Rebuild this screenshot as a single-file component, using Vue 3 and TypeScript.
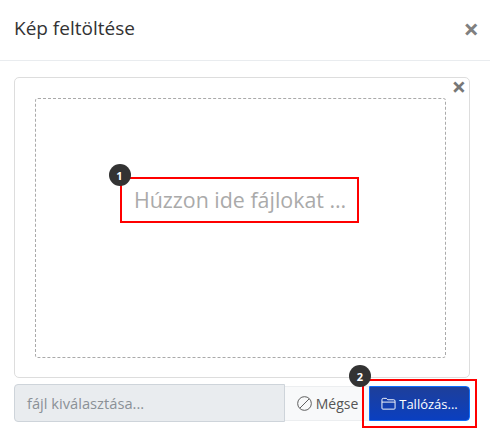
<script setup lang="ts">
const title: string = 'Kép feltöltése'
</script>

<template>
  <div class="modal">
    <header class="head">
      <h1 class="title">{{ title }}</h1>
      <span class="close">×</span>
    </header>
    <main class="body">
      <section class="preview">
        <span class="remove">×</span>
        <div class="zone">
          <div class="drop">
            <span class="marker m1">1</span>
            Húzzon ide fájlokat …
          </div>
        </div>
      </section>
      <div class="group">
        <div class="caption">fájl kiválasztása...</div>
        <button class="cancel">
          <svg class="ico" viewBox="0 0 16 16" fill="none" stroke="currentColor" stroke-width="1">
            <circle cx="8" cy="8" r="7.3" />
            <path d="M3 13 13 3" />
          </svg>
          Mégse
        </button>
        <div class="browse-wrap">
          <span class="marker m2">2</span>
          <span class="outline"></span>
          <button class="browse">
            <svg class="ico folder" viewBox="0 0 16 16" fill="none" stroke="currentColor" stroke-width="1">
              <path d="M1 13V4a1.500 1.500 0 0 1 1.500-1.500h3.200L7.200 4H13.500A1.500 1.500 0 0 1 15 5.500V13a1 1 0 0 1-1 1H2a1 1 0 0 1-1-1Z" />
              <path d="M1 6.500h14" />
            </svg>
            Tallózás...
          </button>
        </div>
      </div>
    </main>
  </div>
</template>

<style>
html, body { margin: 0; background: #fff; }
</style>

<style scoped>
.modal {
  width: 490px;
  height: 434px;
  overflow: hidden;
  font-family: "Open Sans", "Noto Sans", sans-serif;
  color: #212529;
  background: #fff;
}
.head {
  height: 61px;
  box-sizing: border-box;
  border-bottom: 1px solid #e9ecef;
  padding: 0 11px 4px 14px;
  display: flex;
  align-items: center;
  justify-content: space-between;
}
.title {
  margin: 0;
  font-size: 19px;
  font-weight: 400;
  color: #333;
}
.close {
  font-size: 27px;
  font-weight: 700;
  line-height: 1;
  color: #808080;
}
.body {
  padding: 16px 20px 0 14px;
}
.preview {
  position: relative;
  height: 301px;
  box-sizing: border-box;
  border: 1px solid #ddd;
  border-radius: 5px;
  padding: 20px 23px 19px 20px;
}
.remove {
  position: absolute;
  top: -4px;
  right: 3px;
  font-size: 25px;
  line-height: 1;
  font-weight: 700;
  color: #777;
}
.zone {
  height: 100%;
  box-sizing: border-box;
  border: 1px dashed #aaa;
  border-radius: 3px;
  display: flex;
  justify-content: center;
  padding: 78px 3px 0 0;
}
.drop {
  position: relative;
  box-sizing: border-box;
  width: 239px;
  height: 46px;
  border: 2px solid #f00;
  padding: 0 0 2px 2px;
  display: flex;
  align-items: center;
  justify-content: center;
  font-size: 21.400px;
  color: #aaa;
  white-space: nowrap;
}
.marker {
  position: absolute;
  width: 22px;
  height: 22px;
  border-radius: 50%;
  background: #333;
  color: #fff;
  font-size: 11px;
  font-weight: 700;
  display: flex;
  align-items: center;
  justify-content: center;
}
.m1 { left: -13px; top: -15px; }
.m2 { left: -20px; top: -21px; z-index: 2; }
.group {
  display: flex;
  align-items: flex-start;
  margin-top: 6px;
  height: 38px;
}
.caption {
  flex: none;
  width: 271px;
  height: 38px;
  box-sizing: border-box;
  background: #e9ecef;
  border: 1px solid #ced4da;
  border-radius: 4px 0 0 4px;
  color: #8b9197;
  font-size: 14.700px;
  padding: 0 12px;
  display: flex;
  align-items: center;
}
.cancel {
  flex: none;
  width: 84px;
  height: 35px;
  margin-top: 2px;
  box-sizing: border-box;
  background: #f8f9fa;
  border: 0;
  border-top: 1px solid #eceef0;
  border-bottom: 1px solid #eceef0;
  padding: 0 0 0 1px;
  color: #555;
  font-family: inherit;
  font-size: 14px;
  display: flex;
  align-items: center;
  justify-content: center;
  gap: 4px;
}
.ico {
  width: 15px;
  height: 15px;
  flex: none;
}
.browse-wrap {
  position: relative;
  flex: none;
  width: 101px;
  height: 35px;
  margin-top: 2px;
}
.outline {
  position: absolute;
  inset: -7px -7px;
  border: 2px solid #f00;
}
.browse {
  width: 100%;
  height: 100%;
  box-sizing: border-box;
  border: 1px solid #0d6efd;
  border-radius: 0 4px 4px 0;
  background: linear-gradient(#1e3f9a, #0a3fc0);
  color: #fff;
  font-family: inherit;
  font-size: 13px;
  padding: 0;
  display: flex;
  align-items: center;
  justify-content: center;
  gap: 3px;
}
</style>
